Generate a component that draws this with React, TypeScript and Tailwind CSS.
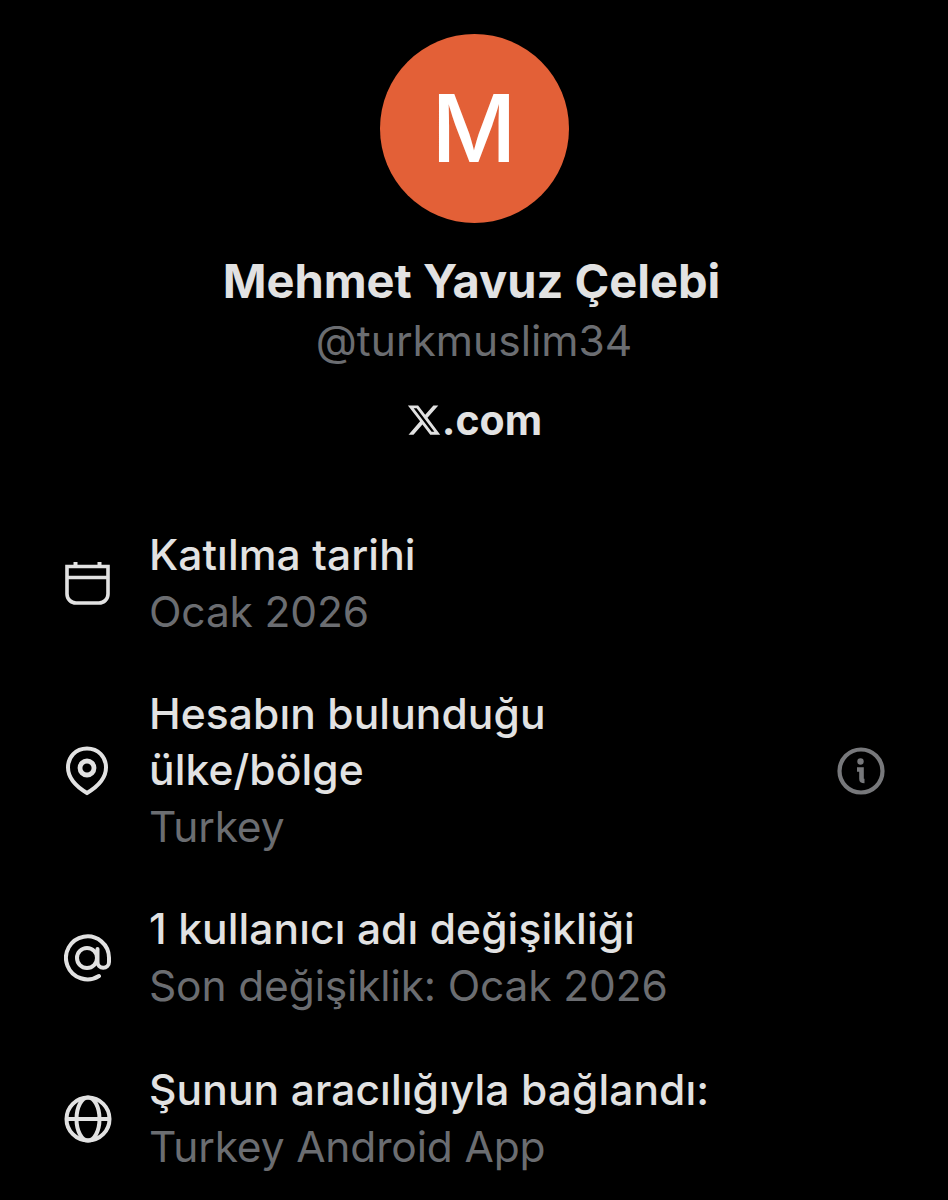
const Row = ({ icon, title, sub, right }: { icon: React.ReactNode; title: React.ReactNode; sub: string; right?: React.ReactNode }) => {
  return (
    <div className="flex items-center">
      <div className="w-[85px] shrink-0 text-[#e2e2e2]">{icon}</div>
      <div className="flex-1">
        <div className="text-[42.5px] leading-[56px] font-medium tracking-[0.1px] text-[#e2e2e2]">{title}</div>
        <div className="text-[42.5px] leading-[58px] tracking-[-0.15px] text-[#6b6d71]">{sub}</div>
      </div>
      {right}
    </div>
  );
};

export default function App() {
  return (
    <div className="w-[948px] h-[1200px] overflow-hidden bg-black font-['Inter','Liberation_Sans',sans-serif]">
      <div className="flex flex-col items-center pt-[34px]">
        <div className="w-[189px] h-[189px] rounded-full bg-[#e36037] flex items-center justify-center text-white text-[93px] font-medium">
          M
        </div>
        <div className="mt-[28px] mr-[5px] text-[47px] leading-[60px] font-bold text-[#e2e2e2]">Mehmet Yavuz Çelebi</div>
        <div className="text-[42.5px] leading-[60px] text-[#6b6d71]">@turkmuslim34</div>
        <div className="mt-[19px] flex items-center text-[41px] leading-[60px] font-bold text-[#e2e2e2]">
          <svg width="36" height="36" viewBox="0 0 24 24" fill="currentColor">
            <path d="M18.244 2.25h3.308l-7.227 8.26 8.502 11.24H16.17l-5.214-6.817L4.99 21.75H1.68l7.73-8.835L1.254 2.25H8.08l4.713 6.231zm-1.161 17.52h1.833L7.084 4.126H5.117z" />
          </svg>
          <span>.com</span>
        </div>
      </div>
      <div className="mt-[77px] pl-[64px] pr-[63px] flex flex-col gap-[45px]">
        <Row
          title="Katılma tarihi"
          sub="Ocak 2026"
          icon={
            <svg width="46" height="46" viewBox="0 0 46 46" fill="none" stroke="currentColor" strokeWidth="3.6">
              <path d="M3 5.5h41V33a9 9 0 0 1-9 9H12a9 9 0 0 1-9-9z" />
              <path d="M3 16.5h41" />
              <path d="M11.5 1v5M35.5 1v5" strokeWidth="4" />
            </svg>
          }
        />
        <Row
          title={
            <>
              Hesabın bulunduğu
              <br />
              ülke/bölge
            </>
          }
          sub="Turkey"
          icon={
            <svg width="46" height="50" viewBox="0 0 46 50" fill="none" stroke="currentColor" strokeWidth="4">
              <path d="M23 2.5C11.5 2.5 4 11 4 21.5C4 32 13 41 23 47C33 41 42 32 42 21.5C42 11 34.5 2.5 23 2.5Z" />
              <circle cx="23" cy="22" r="7" strokeWidth="4.8" />
            </svg>
          }
          right={
            <svg width="48" height="48" viewBox="0 0 48 48" fill="none" stroke="#77787b" strokeWidth="4.2">
              <circle cx="24" cy="24" r="21.5" />
              <circle cx="23.5" cy="14.5" r="3.2" fill="#77787b" stroke="none" />
              <path d="M20 22.5h4.5V32q0 2 3 2" strokeWidth="4.6" />
            </svg>
          }
        />
        <Row
          title="1 kullanıcı adı değişikliği"
          sub="Son değişiklik: Ocak 2026"
          icon={
            <svg width="48" height="48" viewBox="0 0 48 48" fill="none" stroke="currentColor" strokeWidth="4" strokeLinecap="round">
              <circle cx="23" cy="24" r="10" />
              <path d="M33.5 15v13a5.75 5.75 0 0 0 11.5 0V24A21.5 21.5 0 1 0 35 42" />
            </svg>
          }
        />
        <div className="mt-[2px]">
          <Row
            title="Şunun aracılığıyla bağlandı:"
            sub="Turkey Android App"
            icon={
              <svg width="48" height="48" viewBox="0 0 48 48" fill="none" stroke="currentColor" strokeWidth="4">
                <circle cx="24" cy="24" r="21.5" />
                <ellipse cx="24" cy="24" rx="11.5" ry="21.5" />
                <path d="M2 24h44" />
              </svg>
            }
          />
        </div>
      </div>
    </div>
  );
}
